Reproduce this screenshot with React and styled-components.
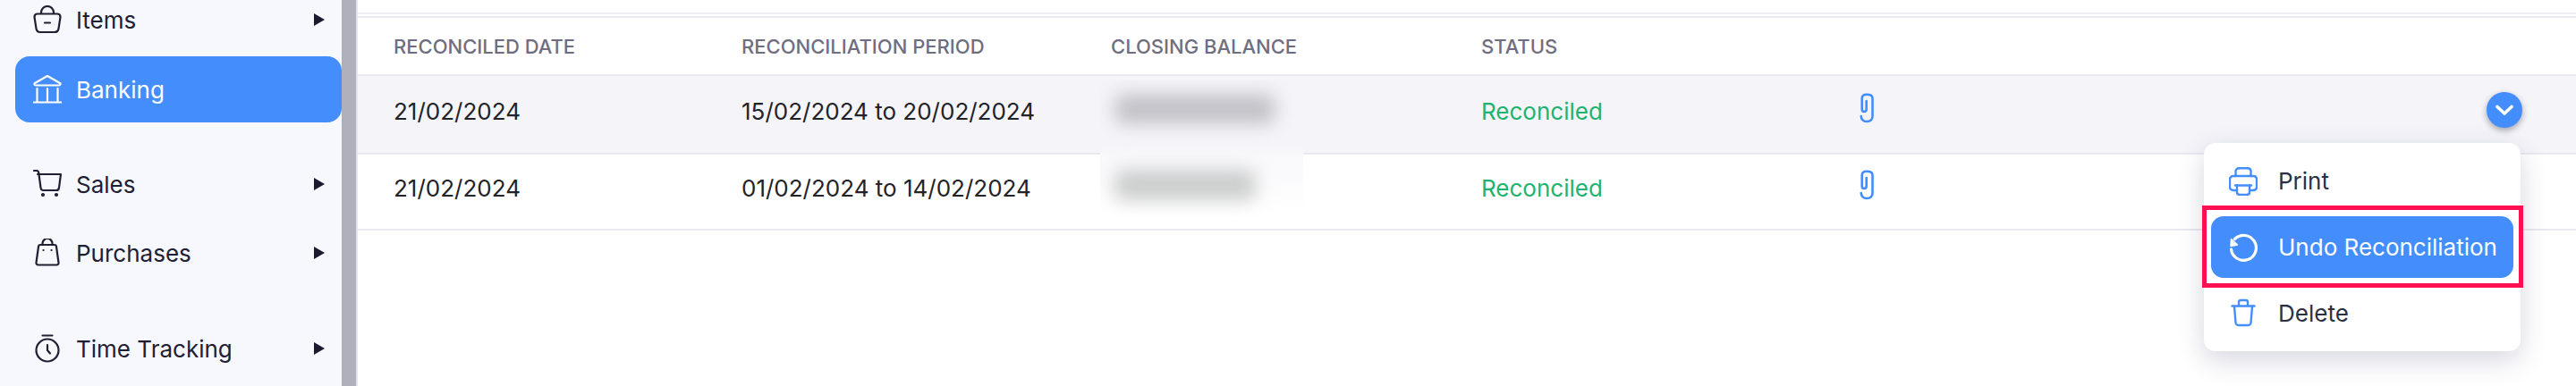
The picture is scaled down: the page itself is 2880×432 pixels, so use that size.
import React from "react";
import styled, { createGlobalStyle } from "styled-components";

const Global = createGlobalStyle`
  html, body { margin: 0; padding: 0; background: #fff; }
  body { width: 2880px; height: 432px; overflow: hidden; font-family: Inter, "Liberation Sans", sans-serif; }
`;

const Page = styled.div`
  display: flex;
  width: 2880px;
  height: 432px;
  overflow: hidden;
`;

const Sidebar = styled.nav`
  box-sizing: border-box;
  width: 382px;
  height: 432px;
  flex: none;
  padding-left: 17px;
  background: #f7f8fe;
  display: flex;
  flex-direction: column;
  overflow: hidden;
`;

const NavItem = styled.div`
  box-sizing: border-box;
  flex: none;
  height: 74px;
  margin-top: ${(p) => p.$gap}px;
  padding: 0 19px 0 20px;
  display: flex;
  align-items: center;
  border-radius: 16px;
  font-size: 26px;
  color: ${(p) => (p.$active ? "#fff" : "#1f2033")};
  background: ${(p) => (p.$active ? "#438efc" : "transparent")};
`;

const NavIcon = styled.svg`
  width: 32px;
  height: 32px;
  flex: none;
  margin-right: 16px;
  fill: none;
  stroke: currentColor;
  stroke-width: 2.2;
  stroke-linecap: round;
  stroke-linejoin: round;
`;

const NavLabel = styled.span`
  flex: 1;
`;

const Caret = styled.span`
  width: 0;
  height: 0;
  border-left: 12px solid #1a1b2e;
  border-top: 7px solid transparent;
  border-bottom: 7px solid transparent;
`;

const Scrollbar = styled.div`
  width: 16px;
  flex: none;
  background: #b0afbc;
  border-right: 2px solid #e4e4ea;
`;

const Main = styled.main`
  flex: 1;
  position: relative;
  padding-top: 14px;
  background: #fff;
`;

const TopRule = styled.div`
  height: 2px;
  background: #eeeef2;
  margin-bottom: 2px;
`;

const Row = styled.div`
  box-sizing: border-box;
  display: grid;
  grid-template-columns: 389px 413px 414px 415px 1fr;
  align-items: center;
  padding-left: 40px;
  padding-bottom: ${(p) => p.$pb || 0}px;
  height: ${(p) => p.$h}px;
  border-top: ${(p) => (p.$top ? "2px solid #e9e9f0" : "none")};
  border-bottom: 2px solid #e9e9f0;
  background: ${(p) => (p.$hover ? "#f4f4f9" : "#fff")};
  position: relative;
`;

const Head = styled.span`
  font-size: 22px;
  font-weight: 500;
  color: #6f6e80;
  text-transform: uppercase;
`;

const Cell = styled.span`
  font-size: 26px;
  color: #222329;
`;

const Status = styled(Cell)`
  color: #1fb36f;
`;

const BlurPatch = styled.div`
  box-sizing: border-box;
  position: absolute;
  left: 830px;
  top: 90px;
  width: 227px;
  height: 152px;
  padding: 15px 0 0 16px;
  display: flex;
  flex-direction: column;
  gap: 51px;
  overflow: hidden;
  background: linear-gradient(#f4f4f9 0, #f5f5f9 48%, #f9f9fb 56%, #fafafc 66%, #fff 100%);
  z-index: 1;
`;

const BlurBar = styled.span`
  display: block;
  flex: none;
  height: 34px;
  width: ${(p) => p.$w}px;
  border-radius: 10px;
  background: ${(p) => p.$c};
  filter: blur(10px);
`;

const Clip = styled.svg`
  width: 16px;
  height: 34px;
  fill: none;
  stroke: #438efc;
  stroke-width: 2.6;
  stroke-linecap: round;
  stroke-linejoin: round;
  margin: -7px 0 0 8px;
  display: block;
`;

const RowButton = styled.span`
  position: absolute;
  left: 2380px;
  top: 18px;
  width: 40px;
  height: 40px;
  border-radius: 50%;
  background: #438efc;
  box-shadow: 0 3px 7px rgba(40, 40, 60, 0.4);
  display: flex;
  align-items: center;
  justify-content: center;
`;

const Menu = styled.div`
  box-sizing: border-box;
  position: absolute;
  left: 2064px;
  top: 160px;
  width: 354px;
  height: 233px;
  padding: 8px;
  display: flex;
  flex-direction: column;
  border-radius: 13px;
  background: #fff;
  box-shadow: 0 10px 30px rgba(50, 50, 100, 0.2);
  z-index: 2;
`;

const MenuItem = styled.div`
  box-sizing: border-box;
  flex: none;
  height: ${(p) => p.$h}px;
  margin-top: ${(p) => p.$gap}px;
  padding-left: 20px;
  display: flex;
  align-items: center;
  font-size: 26px;
  border-radius: 14px;
  color: ${(p) => (p.$active ? "#fff" : "#2d2f45")};
  background: ${(p) => (p.$active ? "#438efc" : "transparent")};
`;

const MenuIcon = styled.svg`
  width: 32px;
  height: 32px;
  flex: none;
  margin-right: 23px;
  fill: none;
  stroke: ${(p) => (p.$active ? "#fff" : "#438efc")};
  stroke-width: ${(p) => (p.$active ? 3.2 : 2.4)};
  stroke-linecap: round;
  stroke-linejoin: round;
`;

const Highlight = styled.div`
  box-sizing: border-box;
  position: absolute;
  left: 2062px;
  top: 230px;
  width: 359px;
  height: 92px;
  border: 5px solid #ff0f52;
  z-index: 3;
  pointer-events: none;
`;

const nav = [
  {
    label: "Items",
    gap: -15,
    icon: (
      <>
        <path d="M9 9V8a7 7 0 0 1 14 0v1" />
        <path d="M1.500 13c0-2 1.500-3.500 3.500-3.500h22c2 0 3.500 1.500 3.500 3.500l-2 13c-.4 2.500-2 4-4.500 4H8c-2.500 0-4.100-1.500-4.500-4z" />
        <path d="M13 19.500h6" />
      </>
    ),
  },
  {
    label: "Banking",
    gap: 4,
    active: true,
    icon: (
      <>
        <path d="M16 1 2 9c-1 .6-.6 2.500 1 2.500h26c1.600 0 2-1.900 1-2.500z" />
        <path d="M4.500 15v15M16 15v15M27.500 15v15M.500 30.500h31" />
      </>
    ),
  },
  {
    label: "Sales",
    gap: 32,
    icon: (
      <>
        <path d="M1 1h3c1 0 2 1 2.200 2L8.500 20c.2 2 1.200 3 3 3H26c2 0 2.700-1 3-3l2-15H5" />
        <circle cx="11" cy="28" r="1" />
        <circle cx="26" cy="28" r="1" />
      </>
    ),
  },
  {
    label: "Purchases",
    gap: 3,
    icon: (
      <>
        <path d="M10.500 7V5.500a5.500 5.500 0 0 1 11 0V7" />
        <path d="M6 9c.1-1.200 1-2 2-2h16c1 0 1.900.8 2 2l2.500 18c.2 1.500-.8 2.500-2.300 2.500H5.800c-1.500 0-2.500-1-2.300-2.500z" />
        <path d="M11.500 13h.1M20.500 13h.1" />
      </>
    ),
  },
  {
    label: "Time Tracking",
    gap: 33,
    icon: (
      <>
        <circle cx="16" cy="18" r="12.500" />
        <path d="M10.500 1.500h11M16 12v6l3 3.500" />
      </>
    ),
  },
];

const rows = [
  { date: "21/02/2024", period: "15/02/2024 to 20/02/2024", h: 88, hover: true },
  { date: "21/02/2024", period: "01/02/2024 to 14/02/2024", h: 85 },
];

export default function App() {
  return (
    <Page>
      <Global />
      <Sidebar>
        {nav.map((n) => (
          <NavItem key={n.label} $gap={n.gap} $active={n.active}>
            <NavIcon viewBox="0 0 32 32">{n.icon}</NavIcon>
            <NavLabel>{n.label}</NavLabel>
            {!n.active && <Caret />}
          </NavItem>
        ))}
      </Sidebar>
      <Scrollbar />
      <Main>
        <TopRule />
        <Row $h={67} $top>
          <Head>Reconciled Date</Head>
          <Head>Reconciliation Period</Head>
          <Head>Closing Balance</Head>
          <Head>Status</Head>
          <span />
        </Row>
        {rows.map((r) => (
          <Row key={r.period} $h={r.h} $hover={r.hover} $pb={8}>
            <Cell>{r.date}</Cell>
            <Cell>{r.period}</Cell>
            <span />
            <Status>Reconciled</Status>
            <Clip viewBox="0 0 16 34">
              <path d="M1.700 26C2 30 4 32 8 32c4 0 6.500-2 6.500-6V6c0-3-2.500-4.300-6.500-4.300C5 1.700 2.700 3 2.700 6v12c0 2.500 1.300 3 2.300 3 2 0 2.700-1 2.700-3V9" />
            </Clip>
            {r.hover && (
              <RowButton>
                <svg width="24" height="24" viewBox="0 0 24 24" fill="none" stroke="#fff" strokeWidth="3.6" strokeLinecap="round" strokeLinejoin="round">
                  <path d="M4 8.500 12 16l8-7.500" />
                </svg>
              </RowButton>
            )}
          </Row>
        ))}
        <BlurPatch>
          <BlurBar $w={180} $c="#c2c2c8" />
          <BlurBar $w={158} $c="#cbcccc" />
        </BlurPatch>
        <Menu>
          <MenuItem $h={69} $gap={0}>
            <MenuIcon viewBox="0 0 32 32">
              <path d="M7.500 10V5c0-2.200 1.500-3.800 3.700-3.800h9.600c2.200 0 3.700 1.600 3.700 3.800v5" />
              <path d="M8 26H5c-2.500 0-4-1.500-4-4v-8c0-2.500 1.500-4 4-4h22c2.500 0 4 1.500 4 4v8c0 2.500-1.500 4-4 4h-3" />
              <path d="M7 20.500h18" />
              <path d="M9 20.500V28c0 2 1 3 3 3h8c2 0 3-1 3-3v-7.500" />
            </MenuIcon>
            Print
          </MenuItem>
          <MenuItem $h={69} $gap={5} $active>
            <MenuIcon $active viewBox="0 0 32 32">
              <path d="M6.500 6.500A14 14 0 1 1 2.500 18" />
              <path d="M2.500 6.500 2 14.500l7.500-1.500z" fill="#fff" strokeWidth="1.500" />
            </MenuIcon>
            Undo Reconciliation
          </MenuItem>
          <MenuItem $h={72} $gap={3}>
            <MenuIcon viewBox="0 0 32 32">
              <path d="M3.500 8.500h25" />
              <path d="M11 8V4c0-1.500 1-2 2-2h6c1 0 2 .5 2 2v4" />
              <path d="M6 9l1.500 18c.2 2 1.300 3 3.200 3h10.600c1.900 0 3-1 3.200-3L26 9" />
            </MenuIcon>
            Delete
          </MenuItem>
        </Menu>
        <Highlight />
      </Main>
    </Page>
  );
}
